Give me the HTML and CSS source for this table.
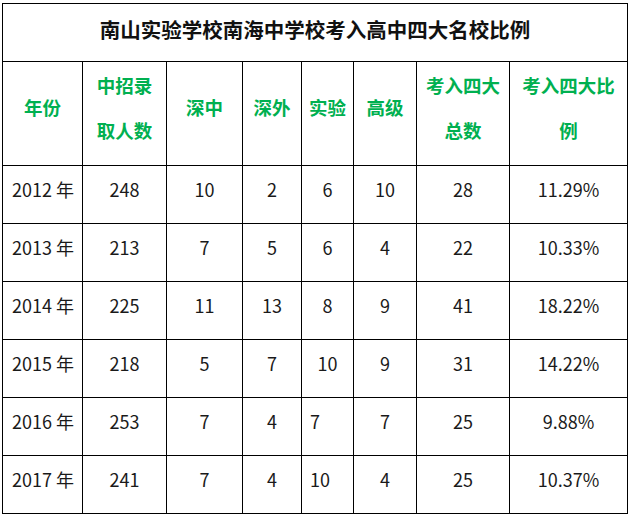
FILE: index.html
```html
<!DOCTYPE html>
<html lang="zh">
<head>
<meta charset="utf-8">
<link rel="stylesheet" href="styles.css">
</head>
<body>
<div class="wrap">
<table class="stats">
  <colgroup>
    <col class="c1"><col class="c2"><col class="c3"><col class="c4"><col class="c5"><col class="c6"><col class="c7"><col class="c8">
  </colgroup>
  <tr class="title-row"><th colspan="8" class="title">南山实验学校南海中学校考入高中四大名校比例</th></tr>
  <tr class="head-row">
    <th>年份</th>
    <th>中招录<br>取人数</th>
    <th>深中</th>
    <th>深外</th>
    <th>实验</th>
    <th>高级</th>
    <th>考入四大<br>总数</th>
    <th>考入四大比<br>例</th>
  </tr>
  <tr><td class="year">2012 年</td><td>248</td><td>10</td><td>2</td><td>6</td><td>10</td><td>28</td><td>11.29%</td></tr>
  <tr><td class="year">2013 年</td><td>213</td><td>7</td><td>5</td><td>6</td><td>4</td><td>22</td><td>10.33%</td></tr>
  <tr><td class="year">2014 年</td><td>225</td><td>11</td><td>13</td><td>8</td><td>9</td><td>41</td><td>18.22%</td></tr>
  <tr><td class="year">2015 年</td><td>218</td><td>5</td><td>7</td><td>10</td><td>9</td><td>31</td><td>14.22%</td></tr>
  <tr><td class="year">2016 年</td><td>253</td><td>7</td><td>4</td><td class="left">7</td><td>7</td><td>25</td><td>9.88%</td></tr>
  <tr><td class="year">2017 年</td><td>241</td><td>7</td><td>4</td><td class="left">10</td><td>4</td><td>25</td><td>10.37%</td></tr>
</table>
</div>
</body>
</html>
```

FILE: styles.css
```css
html, body {
  margin: 0;
  padding: 0;
  background: #fff;
}
.wrap {
  padding: 3px 0 0 2px;
}
.stats {
  border-collapse: collapse;
  table-layout: fixed;
  width: 625px;
  font-family: "Noto Sans CJK SC", "Noto Sans", sans-serif;
  color: #1a1a1a;
}
.c1 { width: 80px; }
.c2 { width: 84px; }
.c3 { width: 76px; }
.c4 { width: 59px; }
.c5 { width: 52px; }
.c6 { width: 63px; }
.c7 { width: 93px; }
.c8 { width: 118px; }
.stats th, .stats td {
  border: 1px solid #000;
  padding: 0 0 11px 0;
  text-align: center;
  vertical-align: middle;
}
.stats td {
  height: 46px;
  font-size: 18px;
  line-height: 24px;
  font-weight: normal;
}
.stats td.year {
  text-align: left;
  padding-left: 9px;
}
.stats td.left {
  text-align: left;
  padding-left: 8px;
}
.title-row .title {
  height: 49px;
  padding-bottom: 8px;
  font-size: 20.5px;
  font-weight: bold;
  color: #111;
  line-height: 28px;
}
.head-row th {
  height: 91px;
  padding-bottom: 12px;
  font-size: 18.5px;
  font-weight: bold;
  color: #00b050;
  line-height: 45px;
}
```
